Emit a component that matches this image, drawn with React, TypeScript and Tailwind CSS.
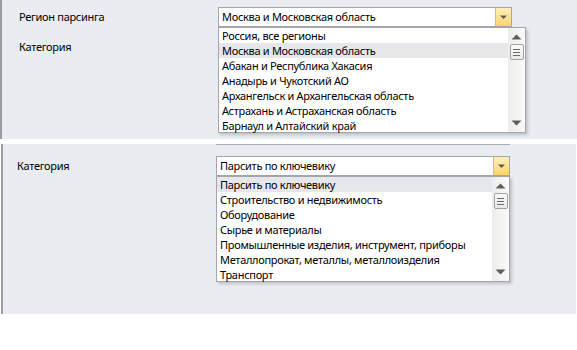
import React from "react";

const regions = [
  "Россия, все регионы",
  "Москва и Московская область",
  "Абакан и Республика Хакасия",
  "Анадырь и Чукотский АО",
  "Архангельск и Архангельская область",
  "Астрахань и Астраханская область",
  "Барнаул и Алтайский край",
];

const cats = [
  "Парсить по ключевику",
  "Строительство и недвижимость",
  "Оборудование",
  "Сырье и материалы",
  "Промышленные изделия, инструмент, приборы",
  "Металлопрокат, металлы, металлоизделия",
  "Транспорт",
];

function ArrowBtn() {
  return (
    <div className="w-[16px] h-full border-l border-[#e3bf5a] bg-gradient-to-b from-[#fff0b8] to-[#fdd36c] flex items-center justify-center">
      <svg width="9" height="6" viewBox="0 0 9 6">
        <path d="M1 1.5 L8 1.5 L4.5 5 Z" fill="#5a5a5a" />
      </svg>
    </div>
  );
}

function Combo({ value }: { value: string }) {
  return (
    <div className="w-[294px] h-[20px] border border-[#a3a6ab] bg-white flex items-stretch">
      <div className="flex-1 pl-[3px] leading-[18px] truncate">{value}</div>
      <ArrowBtn />
    </div>
  );
}

function Scrollbar() {
  return (
    <div className="w-[17px] h-full bg-gradient-to-r from-[#ececec] to-[#fafafa] flex flex-col items-center">
      <svg width="11" height="6" viewBox="0 0 11 6" className="mt-[6px]">
        <path d="M0.5 5.5 L5.5 0.5 L10.5 5.5 Z" fill="#5f5f5f" />
      </svg>
      <div className="mt-[4px] w-[14px] h-[16px] border border-[#9fa2a6] rounded-[2px] bg-gradient-to-b from-[#fbfbfb] to-[#e9e9e9] flex flex-col items-center justify-center gap-[2px]">
        <div className="w-[7px] h-px bg-[#6c6c6c]" />
        <div className="w-[7px] h-px bg-[#6c6c6c]" />
        <div className="w-[7px] h-px bg-[#6c6c6c]" />
      </div>
      <div className="flex-1" />
      <svg width="11" height="6" viewBox="0 0 11 6" className="mb-[6px]">
        <path d="M0.5 0.5 L10.5 0.5 L5.5 5.5 Z" fill="#5f5f5f" />
      </svg>
    </div>
  );
}

function List({ items, sel, width }: { items: string[]; sel: number; width: string }) {
  return (
    <div className={`${width} h-[106px] border border-[#a3a6ab] bg-white flex shadow-[2px_2px_3px_rgba(0,0,0,0.18)]`}>
      <div className="flex-1 flex flex-col">
        {items.map((t, i) => (
          <div
            key={t}
            className={`h-[15px] leading-[15px] pl-[3px] whitespace-nowrap ${i === sel ? "bg-[#e6e7eb]" : ""}`}
          >
            {t}
          </div>
        ))}
      </div>
      <Scrollbar />
    </div>
  );
}

export default function App() {
  return (
    <div
      className="w-[577px] h-[350px] bg-white text-[11px] tracking-[-0.3px] text-black"
      style={{ fontFamily: '"Noto Sans", "Liberation Sans", sans-serif' }}
    >
      <div className="h-[139px] w-[577px] bg-[#e9ecf0] border-l-2 border-[#9a9da3] flex pt-[7px]">
        <div className="w-[216px] pl-[17px] flex flex-col">
          <div className="h-[20px] leading-[20px]">Регион парсинга</div>
          <div className="h-[20px] leading-[20px] mt-[10px]">Категория</div>
        </div>
        <div className="flex flex-col">
          <Combo value="Москва и Московская область" />
          <List items={regions} sel={1} width="w-[308px]" />
        </div>
      </div>
      <div className="h-[5px]" />
      <div className="h-[170px] w-[575px] ml-[1px] bg-[#e9ecf0] border-l-2 border-[#9a9da3] flex flex-col">
        <div className="h-px ml-[213px] w-[294px] bg-[#a9acb1]" />
        <div className="flex pt-[11px]">
          <div className="w-[213px] pl-[14px] h-[20px] leading-[20px]">Категория</div>
          <div className="flex flex-col">
            <Combo value="Парсить по ключевику" />
            <List items={cats} sel={0} width="w-[294px]" />
          </div>
        </div>
      </div>
    </div>
  );
}
